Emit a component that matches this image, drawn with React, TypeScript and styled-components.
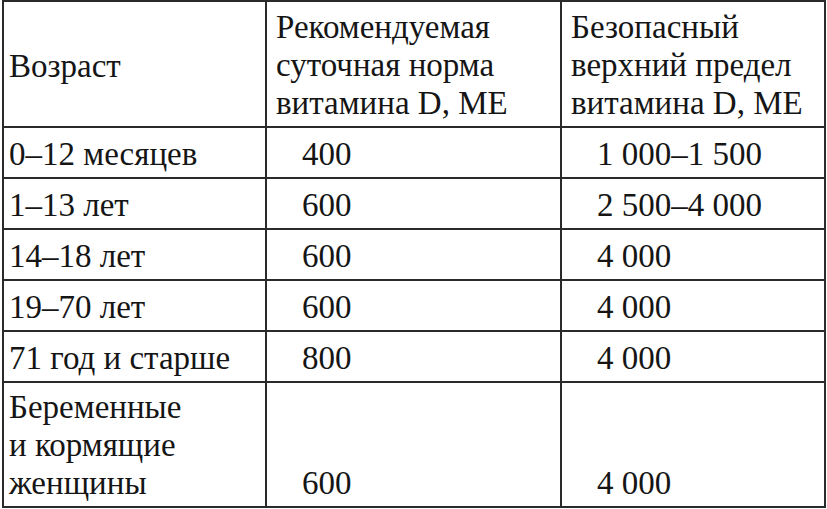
import styled, { createGlobalStyle } from 'styled-components';

const GlobalStyle = createGlobalStyle`
  html, body {
    margin: 0;
    padding: 0;
    background: #ffffff;
  }
  * {
    box-sizing: border-box;
  }
`;

interface rowType {
  age: string;
  norm: string;
  limit: string;
}

const rows: rowType[] = [
  { age: '0–12 месяцев', norm: '400', limit: '1 000–1 500' },
  { age: '1–13 лет', norm: '600', limit: '2 500–4 000' },
  { age: '14–18 лет', norm: '600', limit: '4 000' },
  { age: '19–70 лет', norm: '600', limit: '4 000' },
  { age: '71 год и старше', norm: '800', limit: '4 000' },
  { age: 'Беременные\nи кормящие\nженщины', norm: '600', limit: '4 000' },
];

function App() {
  return (
    <>
      <GlobalStyle />
      <Page>
        <Table>
          <Cell $first $center>
            Возраст
          </Cell>
          <Cell>{'Рекомендуемая\nсуточная норма\nвитамина D, МЕ'}</Cell>
          <Cell>{'Безопасный\nверхний предел\nвитамина D, МЕ'}</Cell>
          {rows.map((row, i) => (
            <Row key={i}>
              <Cell $first>{row.age}</Cell>
              <Cell $indent>{row.norm}</Cell>
              <Cell $indent>{row.limit}</Cell>
            </Row>
          ))}
        </Table>
      </Page>
    </>
  );
}

export default App;

const Page = styled.div`
  width: 827px;
  height: 509px;
  padding-left: 2px;
  background: #ffffff;
`;

const Table = styled.div`
  display: grid;
  grid-template-columns: 263px 295px 264px;
  grid-template-rows: 126px repeat(5, 51px) 125px;
  width: 824px;
  border-top: 2px solid #2a2a2a;
  border-left: 2px solid #2a2a2a;
  font-family: 'Liberation Serif', 'DejaVu Serif', serif;
  font-size: 33px;
  line-height: 38px;
  color: #151515;
`;

const Row = styled.div`
  display: contents;
`;

const Cell = styled.div<{ $center?: boolean; $indent?: boolean; $first?: boolean }>`
  display: flex;
  flex-direction: column;
  justify-content: ${(props) => (props.$center ? 'center' : 'flex-end')};
  padding-top: 8px;
  padding-right: 4px;
  padding-bottom: 4px;
  padding-left: ${(props) => (props.$indent ? '35px' : props.$first ? '5px' : '9px')};
  border-right: 2px solid #2a2a2a;
  border-bottom: 2px solid #2a2a2a;
  white-space: pre-line;
`;
